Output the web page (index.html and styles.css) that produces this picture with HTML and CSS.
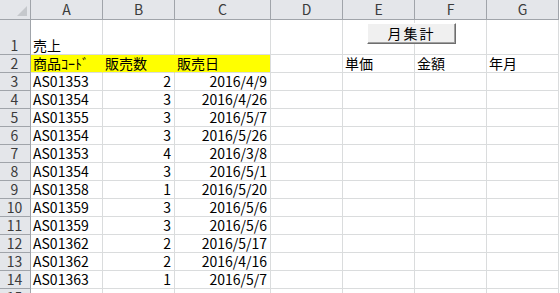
FILE: index.html
```html
<!DOCTYPE html>
<html lang="ja">
<head>
    <meta charset="UTF-8">
    <title>売上</title>
    <link rel="stylesheet" href="styles.css">
</head>
<body>
    <div class="sheet">
        <div class="grid top">
            <!-- column headers -->
            <div class="corner"><span class="select-all"></span></div>
            <div class="col-head">A</div>
            <div class="col-head">B</div>
            <div class="col-head">C</div>
            <div class="col-head">D</div>
            <div class="col-head">E</div>
            <div class="col-head">F</div>
            <div class="col-head">G</div>

            <!-- row 1 -->
            <div class="row-head tall">1</div>
            <div class="cell tall">売上</div>
            <div class="cell"></div>
            <div class="cell"></div>
            <div class="cell"></div>
            <div class="cell"></div>
            <div class="cell"></div>
            <div class="cell"></div>

            <!-- row 2 -->
            <div class="row-head">2</div>
            <div class="cell fill">商品ｺｰﾄﾞ</div>
            <div class="cell fill">販売数</div>
            <div class="cell fill last">販売日</div>
            <div class="cell"></div>
            <div class="cell">単価</div>
            <div class="cell">金額</div>
            <div class="cell">年月</div>
        </div>
        <div class="grid" id="rows"></div>

        <button class="sheet-btn">月集計</button>
    </div>

    <script>
        const sales = [
            ['AS01353', 2, '2016/4/9'],
            ['AS01354', 3, '2016/4/26'],
            ['AS01355', 3, '2016/5/7'],
            ['AS01354', 3, '2016/5/26'],
            ['AS01353', 4, '2016/3/8'],
            ['AS01354', 3, '2016/5/1'],
            ['AS01358', 1, '2016/5/20'],
            ['AS01359', 3, '2016/5/6'],
            ['AS01359', 3, '2016/5/6'],
            ['AS01362', 2, '2016/5/17'],
            ['AS01362', 2, '2016/4/16'],
            ['AS01363', 1, '2016/5/7']
        ];

        let html = '';
        sales.forEach((row, i) => {
            html += `
                <div class="row-head">${i + 3}</div>
                <div class="cell">${row[0]}</div>
                <div class="cell num">${row[1]}</div>
                <div class="cell num">${row[2]}</div>
                <div class="cell"></div>
                <div class="cell"></div>
                <div class="cell"></div>
                <div class="cell"></div>
            `;
        });
        // an empty row 15, cut off by the window
        html += '<div class="row-head">15</div>' + '<div class="cell"></div>'.repeat(7);
        document.getElementById('rows').innerHTML = html;
    </script>
</body>
</html>
```

FILE: styles.css
```css
* {
    margin: 0;
    padding: 0;
    box-sizing: border-box;
}

body {
    font-family: "Noto Sans CJK JP", "Liberation Sans", sans-serif;
    font-size: 14px;
    color: #000;
    background-color: #fff;
    overflow: hidden;
}

.sheet {
    position: relative;
    width: 560px;
}

.grid {
    display: grid;
    grid-template-columns: 31px 72px 72px 96px 72px 72px 72px 72px;
    grid-auto-rows: 18px;
}

.grid.top {
    grid-template-rows: 20px 35px 18px;
}

.corner,
.col-head,
.row-head {
    background-color: #e4e6ea;
    color: #3b3b3b;
    border-right: 1px solid #a0a4aa;
    border-bottom: 1px solid #a0a4aa;
}

.corner {
    position: relative;
}

.select-all {
    position: absolute;
    right: 3px;
    bottom: 3px;
    width: 0;
    height: 0;
    border-left: 10px solid transparent;
    border-bottom: 10px solid #c5c8cc;
}

.col-head {
    line-height: 19px;
    text-align: center;
}

.row-head {
    text-align: center;
    line-height: 17px;
    padding-right: 1px;
}

.cell {
    border-right: 1px solid #dadcdd;
    border-bottom: 1px solid #dadcdd;
    line-height: 17px;
    padding: 0 3px 0 2px;
    white-space: nowrap;
    overflow: hidden;
}

/* row 1 is taller; its text sits on the bottom edge */
.tall {
    display: flex;
    align-items: flex-end;
    justify-content: center;
}

.cell.tall {
    justify-content: flex-start;
}

.fill {
    background-color: #ffff00;
    border-right-color: #ffff00;
}

.fill.last {
    border-right-color: #dadcdd;
}

.num {
    text-align: right;
}

.sheet-btn {
    position: absolute;
    left: 367px;
    top: 23px;
    width: 89px;
    height: 21px;
    font-family: inherit;
    font-size: 14px;
    line-height: 17px;
    letter-spacing: 2px;
    color: #000;
    background-color: #f0f0f0;
    border: 1px solid;
    border-color: #fff #6e6e6e #6e6e6e #fff;
    box-shadow: inset -1px -1px 0 #a0a0a0;
}
```
